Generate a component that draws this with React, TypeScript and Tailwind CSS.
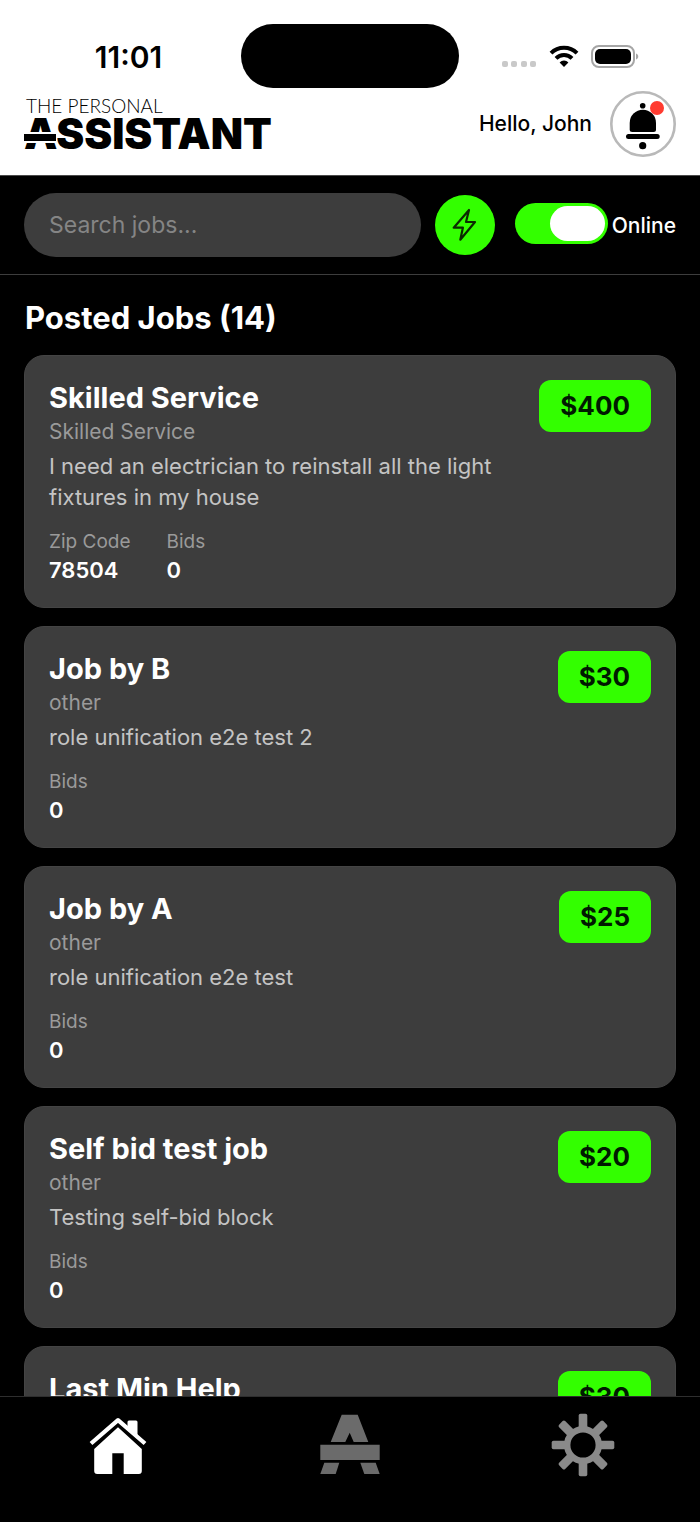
import { useState } from 'react'

const jobs = [
    { id: 1, title: 'Skilled Service', category: 'Skilled Service', description: 'I need an electrician to reinstall all the light fixtures in my house', zip: '78504', bids: 0, price: 400 },
    { id: 2, title: 'Job by B', category: 'other', description: 'role unification e2e test 2', bids: 0, price: 30 },
    { id: 3, title: 'Job by A', category: 'other', description: 'role unification e2e test', bids: 0, price: 25 },
    { id: 4, title: 'Self bid test job', category: 'other', description: 'Testing self-bid block', bids: 0, price: 20 },
    { id: 5, title: 'Last Min Help', category: 'other', description: 'Last minute help', bids: 0, price: 30 },
]

const StatusBar = () => {
    return (
        <div className="grid grid-cols-[1fr_218px_1fr] items-center px-4">
            <span className="pt-[2px] text-center text-[30px] leading-9 font-semibold">11:01</span>
            <div className="h-16 rounded-full bg-black" />
            <div className="flex items-center justify-center gap-3 pr-1">
                <svg width="36" height="24" viewBox="0 0 36 24" fill="#c9c9c9">
                    <rect x="1" y="17" width="6" height="6" rx="2" />
                    <rect x="10" y="17" width="6" height="6" rx="2" />
                    <rect x="20" y="17" width="6" height="6" rx="2" />
                    <rect x="29" y="17" width="6" height="6" rx="2" />
                </svg>
                <svg width="30" height="24" viewBox="0 0 30 24" fill="none" stroke="#000" strokeWidth="4">
                    <path d="M2 9.2a18.5 18.5 0 0 1 26 0" />
                    <path d="M7 14.4a11.4 11.4 0 0 1 16 0" />
                    <path d="M15 23l-4.4-4.6a6.2 6.2 0 0 1 8.8 0z" fill="#000" stroke="none" />
                </svg>
                <svg width="48" height="24" viewBox="0 0 48 24">
                    <rect x="1" y="2" width="42" height="21" rx="7" fill="none" stroke="#a6a6a6" strokeWidth="2" />
                    <rect x="4" y="5" width="36" height="15" rx="5" fill="#000" />
                    <path d="M45 9.5c3 1 3 5 0 6z" fill="#a6a6a6" />
                </svg>
            </div>
        </div>
    )
}

const Brand = () => {
    return (
        <div>
            <p className="pl-[2px] font-['Lato'] text-[19px] leading-5 font-light">THE PERSONAL</p>
            <p className="relative text-[42px] leading-9 font-black">
                ASSISTANT
                <span className="absolute top-4 left-0 h-[11px] w-8 border-y-2 border-white bg-black" />
            </p>
        </div>
    )
}

const Header = () => {
    return (
        <header className="border-b border-[#4a4a4a] bg-white pt-6 pb-[18px] text-black">
            <StatusBar />
            <div className="mt-[3px] flex items-center justify-between px-6">
                <Brand />
                <div className="flex items-center gap-[18px]">
                    <span className="text-[21px] font-medium">Hello, John</span>
                    <button aria-label="Notifications" className="relative h-[66px] w-[66px]">
                        <svg width="66" height="66" viewBox="0 0 66 66">
                            <circle cx="33" cy="33" r="31.7" fill="none" stroke="#b9b9b9" strokeWidth="2.6" />
                            <circle cx="32.7" cy="14.7" r="2.8" />
                            <path d="M19.7 32a13.15 13.3 0 0 1 26.3 0v6.5q0 2.5-2.5 2.5h-21.3q-2.5 0-2.5-2.5z" />
                            <rect x="16" y="43" width="33.7" height="5" rx="2.5" />
                            <circle cx="32.7" cy="54.7" r="3.6" />
                        </svg>
                        <span className="absolute top-[10px] right-3 h-[14px] w-[14px] rounded-full bg-[#ff3b30]" />
                    </button>
                </div>
            </div>
        </header>
    )
}

const SearchBar = () => {
    const [search, setSearch] = useState('')
    const [online, setOnline] = useState(true)

    return (
        <section className="flex items-center border-b border-[#3d3d3d] px-6 py-[17px]">
            <input
                type="text"
                aria-label="Search jobs"
                placeholder="Search jobs..."
                value={search}
                onChange={(e) => setSearch(e.target.value)}
                className="h-16 min-w-0 flex-1 rounded-full bg-[#3d3d3d] px-[25px] text-[23px] text-white outline-none placeholder:text-[#858585]"
            />
            <button aria-label="Quick jobs" className="ml-[14px] h-[60px] w-[60px] shrink-0 rounded-full bg-[#33ff00]">
                <svg width="60" height="60" viewBox="0 0 60 60" fill="none" stroke="#0b2a00" strokeWidth="2.2" strokeLinejoin="round">
                    <path d="M34 15L31 27H40L25.3 44.7L27.9 32.7H18.7Z" />
                </svg>
            </button>
            <label className="ml-5 flex shrink-0 cursor-pointer items-start gap-1 text-[21px] leading-[45px] font-medium">
                <input
                    type="checkbox"
                    role="switch"
                    checked={online}
                    onChange={() => setOnline(!online)}
                    className="peer sr-only"
                />
                <span className="flex h-[41px] w-[93px] items-center rounded-full bg-[#555555] p-[3px] peer-checked:justify-end peer-checked:bg-[#33ff00]">
                    <span className="h-[35px] w-[55px] rounded-full bg-white" />
                </span>
                Online
            </label>
        </section>
    )
}

const Stat = ({ label, value }) => {
    return (
        <div>
            <dt className="text-[19px] leading-6 text-[#9a9a9a]">{label}</dt>
            <dd className="mt-1 text-[22px] leading-[25px] font-semibold">{value}</dd>
        </div>
    )
}

const JobCard = ({ job }) => {
    return (
        <li className="flex items-start justify-between gap-9 rounded-[20px] border border-[#444444] bg-[#3d3d3d] p-6">
            <div className="min-w-0">
                <h2 className="text-[29px] leading-9 font-bold">{job.title}</h2>
                <p className="text-[21px] leading-8 text-[#9a9a9a]">{job.category}</p>
                <p className="mt-[3px] text-[22px] leading-[31px] text-[#c4c4c4]">{job.description}</p>
                <dl className="mt-[17px] flex gap-9">
                    {job.zip && <Stat label="Zip Code" value={job.zip} />}
                    <Stat label="Bids" value={job.bids} />
                </dl>
            </div>
            <span className="shrink-0 rounded-xl bg-[#33ff00] px-[21px] text-[26px] leading-[52px] font-bold text-[#001a00]">
                ${job.price}
            </span>
        </li>
    )
}

const TabBar = () => {
    return (
        <nav className="grid h-[126px] shrink-0 grid-cols-3 items-start justify-items-center border-t border-[#2e2e2e] bg-black pt-4">
            <a href="#home" aria-label="Home">
                <svg width="64" height="64" viewBox="0 0 64 64" fill="#fff">
                    <path d="M42.5 17V9q0-1.5 1.5-1.5h7q1.5 0 1.5 1.5v17z" />
                    <path d="M6 30.5L33 7.2L60 30.5" fill="none" stroke="#fff" strokeWidth="4.2" strokeLinejoin="round" />
                    <path d="M33 14.3L56.8 36V58q0 3-3 3H38.7V40.3H27.3V61H12.2q-3 0-3-3V36z" />
                </svg>
            </a>
            <a href="#assistant" aria-label="Assistant">
                <svg width="64" height="64" viewBox="0 0 64 64" fill="#6b6b6b">
                    <path d="M23.7 1.7H39.7L50.3 29H35.7L31.7 19.7L27.3 29H12.7Z" />
                    <path d="M2.3 31.7H61.7V47H2.3Z" />
                    <path d="M6.3 49.7H21.3L17.7 61H2.3Z" />
                    <path d="M42.3 49.7H57.7L61.7 61H46.3Z" />
                </svg>
            </a>
            <a href="#settings" aria-label="Settings">
                <svg width="64" height="64" viewBox="0 0 64 64" fill="#8a8a8a">
                    <circle cx="32" cy="32" r="15.8" fill="none" stroke="#8a8a8a" strokeWidth="6.4" />
                    {[0, 45, 90, 135, 180, 225, 270, 315].map((angle) => (
                        <rect key={angle} x="27.7" y="0.7" width="8.6" height="14.5" rx="1.8" transform={`rotate(${angle} 32 32)`} />
                    ))}
                </svg>
            </a>
        </nav>
    )
}

const App = () => {
    return (
        <div className="flex h-screen flex-col bg-black font-['Inter',sans-serif] text-white">
            <Header />
            <SearchBar />
            <main className="min-h-0 flex-1 overflow-hidden px-6">
                <h1 className="pt-[25px] pb-[19px] pl-px text-[31px] leading-9 font-bold">Posted Jobs (14)</h1>
                <ul className="grid gap-[18px]">
                    {jobs.map((job) => (
                        <JobCard key={job.id} job={job} />
                    ))}
                </ul>
            </main>
            <TabBar />
        </div>
    )
}

export default App
